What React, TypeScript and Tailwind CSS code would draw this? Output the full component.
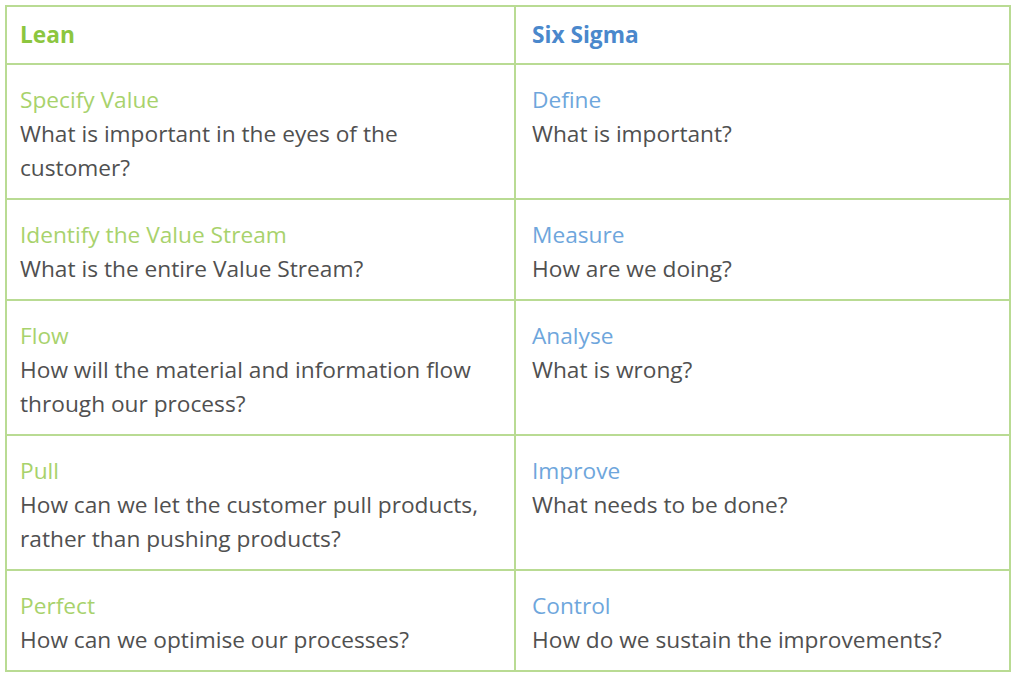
import React from "react";

const rows = [
  {
    lt: "Specify Value",
    lb: "What is important in the eyes of the customer?",
    rt: "Define",
    rb: "What is important?",
  },
  {
    lt: "Identify the Value Stream",
    lb: "What is the entire Value Stream?",
    rt: "Measure",
    rb: "How are we doing?",
  },
  {
    lt: "Flow",
    lb: "How will the material and information flow through our process?",
    rt: "Analyse",
    rb: "What is wrong?",
  },
  {
    lt: "Pull",
    lb: "How can we let the customer pull products, rather than pushing products?",
    rt: "Improve",
    rb: "What needs to be done?",
  },
  {
    lt: "Perfect",
    lb: "How can we optimise our processes?",
    rt: "Control",
    rb: "How do we sustain the improvements?",
  },
];

export default function App() {
  return (
    <div
      className="w-[1024px] h-[677px] bg-white pl-[5px] pt-[5px]"
      style={{ fontFamily: '"Open Sans", "Noto Sans", sans-serif' }}
    >
      <table className="border-collapse table-fixed w-[1006px] text-[22.7px] leading-[34px] text-[#505050]">
        <colgroup>
          <col className="w-[509px]" />
          <col />
        </colgroup>
        <thead>
          <tr className="h-[58px]">
            <th className="border-2 border-[#b9db93] text-left font-bold pl-[13px] text-[#8cc63f] align-middle">
              Lean
            </th>
            <th className="border-2 border-[#b9db93] text-left font-bold pl-[16px] text-[#4a88cc] align-middle">
              Six Sigma
            </th>
          </tr>
        </thead>
        <tbody>
          {rows.map((r, i) => (
            <tr key={i}>
              <td className="border-2 border-[#b9db93] align-top pl-[13px] pt-[18px] pb-[13px]">
                <div className="w-[476px]">
                  <div className="text-[#a8d26c]">{r.lt}</div>
                  <div>{r.lb}</div>
                </div>
              </td>
              <td className="border-2 border-[#b9db93] align-top pl-[16px] pt-[18px] pb-[13px]">
                <div className="w-[460px]">
                  <div className="text-[#6ea6dc]">{r.rt}</div>
                  <div>{r.rb}</div>
                </div>
              </td>
            </tr>
          ))}
        </tbody>
      </table>
    </div>
  );
}
